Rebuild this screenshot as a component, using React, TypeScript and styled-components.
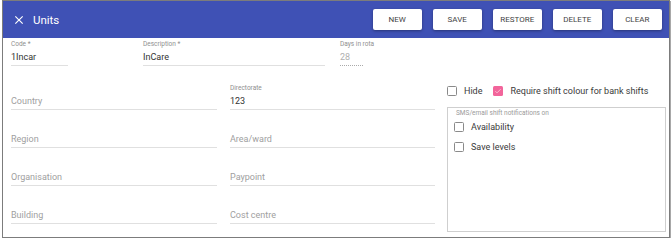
import React from 'react';
import styled, { createGlobalStyle } from 'styled-components';

const GlobalStyle = createGlobalStyle`
  body {
    margin: 0;
    background: #fff;
    font-family: Roboto, "Liberation Sans", sans-serif;
  }
`;

const Frame = styled.div`
  box-sizing: border-box;
  width: 668px;
  height: 238px;
  margin-left: 2px;
  border: 1px solid #7c7c7c;
  box-shadow: 1px 1px 0 #a8a8a8;
  display: flex;
  flex-direction: column;
  overflow: hidden;
`;

const Header = styled.div`
  height: 37px;
  flex-shrink: 0;
  display: flex;
  align-items: center;
  padding: 0 7px 0 9px;
  background: #3f51b5;
  color: #fff;
`;

const CloseIcon = styled.svg`
  width: 14px;
  height: 14px;
  fill: #fff;
`;

const Title = styled.span`
  margin-left: 7px;
  font-size: 11.5px;
  flex-grow: 1;
`;

const Actions = styled.div`
  display: flex;
  gap: 10.5px;
`;

const ActionButton = styled.button`
  width: 49.5px;
  height: 21px;
  padding: 0;
  border: none;
  border-radius: 2px;
  background: #fff;
  box-shadow: 0 1px 3px rgba(0, 0, 0, 0.35);
  font-family: Roboto, "Liberation Sans", sans-serif;
  font-size: 8px;
  font-weight: 400;
  color: #444;
  text-transform: uppercase;
`;

const Body = styled.div`
  padding: 2px 2px 0 8px;
  display: flex;
  flex-direction: column;
`;

const TopRow = styled.div`
  display: flex;
  align-items: flex-end;
`;

const Field = styled.div<{ $width?: number; $gap?: number; $dotted?: boolean }>`
  box-sizing: border-box;
  display: flex;
  flex-direction: column;
  justify-content: flex-end;
  width: ${p => (p.$width ? `${p.$width}px` : 'auto')};
  margin-left: ${p => p.$gap || 0}px;
  padding-bottom: 2px;
  border-bottom: 1px ${p => (p.$dotted ? 'dotted #aaa' : 'solid #e0e0e0')};
`;

const Label = styled.span`
  font-size: 6.5px;
  line-height: 9px;
  margin-bottom: 2px;
  color: #8f8f8f;
  white-space: nowrap;
`;

const Value = styled.span<{ $muted?: boolean; $placeholder?: boolean }>`
  font-size: 9px;
  line-height: 12px;
  color: ${p => (p.$placeholder ? '#a0a0a0' : p.$muted ? '#b0b0b0' : '#333')};
  white-space: nowrap;
`;

const MainRow = styled.div`
  display: flex;
  margin-top: 6px;
`;

const FieldGrid = styled.div`
  display: grid;
  grid-template-columns: 206px 205px;
  grid-auto-rows: 38px;
  column-gap: 13px;
`;

const Side = styled.div`
  margin-left: 12px;
  width: 219px;
  display: flex;
  flex-direction: column;
`;

const CheckRow = styled.div`
  display: flex;
  align-items: center;
  height: 14px;
  margin-top: 12px;
`;

const CheckItem = styled.label<{ $gap?: number }>`
  display: flex;
  align-items: center;
  gap: 7px;
  margin-left: ${p => p.$gap || 0}px;
  font-size: 9px;
  color: #3a3a3a;
  white-space: nowrap;
`;

const Box = styled.span<{ $checked?: boolean }>`
  box-sizing: border-box;
  width: 10px;
  height: 10px;
  border-radius: 1.5px;
  border: ${p => (p.$checked ? 'none' : '1.5px solid #8a8a8a')};
  background: ${p => (p.$checked ? '#f2659b' : '#fff')};
  display: flex;
  align-items: center;
  justify-content: center;
`;

const Tick = styled.svg`
  width: 8px;
  height: 8px;
  fill: none;
  stroke: #fbd0e0;
  stroke-width: 2.4;
`;

const NotifyBox = styled.div`
  box-sizing: border-box;
  margin-top: 9px;
  height: 125px;
  border: 1px solid #cfcfcf;
  padding: 1px 0 0 6px;
  display: flex;
  flex-direction: column;
`;

const NotifyLabel = styled.span`
  font-size: 6.5px;
  line-height: 8px;
  padding-left: 2px;
  color: #9a9a9a;
`;

const NotifyRow = styled.div`
  height: 20px;
  display: flex;
  align-items: center;
`;

const Checkbox: React.FC<{ checked?: boolean }> = ({ checked }) => (
  <Box $checked={checked}>
    {checked && (
      <Tick viewBox="0 0 24 24">
        <path d="M4 12.5l5 5L20 6.5" />
      </Tick>
    )}
  </Box>
);

const gridFields = [
  { placeholder: 'Country' },
  { label: 'Directorate', value: '123' },
  { placeholder: 'Region' },
  { placeholder: 'Area/ward' },
  { placeholder: 'Organisation' },
  { placeholder: 'Paypoint' },
  { placeholder: 'Building' },
  { placeholder: 'Cost centre' },
];

const App: React.FC = function() {
  return (
    <>
      <GlobalStyle />
      <Frame>
        <Header>
          <CloseIcon viewBox="0 0 24 24">
            <path d="M19 6.41 17.59 5 12 10.59 6.41 5 5 6.41 10.59 12 5 17.59 6.41 19 12 13.41 17.59 19 19 17.59 13.41 12z" />
          </CloseIcon>
          <Title>Units</Title>
          <Actions>
            {['New', 'Save', 'Restore', 'Delete', 'Clear'].map(name => (
              <ActionButton key={name}>{name}</ActionButton>
            ))}
          </Actions>
        </Header>
        <Body>
          <TopRow>
            <Field $width={57}>
              <Label>Code *</Label>
              <Value>1Incar</Value>
            </Field>
            <Field $width={182} $gap={75}>
              <Label>Description *</Label>
              <Value>InCare</Value>
            </Field>
            <Field $width={23} $gap={15} $dotted>
              <Label>Days in rota</Label>
              <Value $muted>28</Value>
            </Field>
          </TopRow>
          <MainRow>
            <FieldGrid>
              {gridFields.map((f, i) => (
                <Field key={i}>
                  {f.label && <Label>{f.label}</Label>}
                  {f.value ? <Value>{f.value}</Value> : <Value $placeholder>{f.placeholder}</Value>}
                </Field>
              ))}
            </FieldGrid>
            <Side>
              <CheckRow>
                <CheckItem>
                  <Checkbox />
                  Hide
                </CheckItem>
                <CheckItem $gap={11}>
                  <Checkbox checked />
                  Require shift colour for bank shifts
                </CheckItem>
              </CheckRow>
              <NotifyBox>
                <NotifyLabel>SMS/email shift notifications on</NotifyLabel>
                <NotifyRow>
                  <CheckItem>
                    <Checkbox />
                    Availability
                  </CheckItem>
                </NotifyRow>
                <NotifyRow>
                  <CheckItem>
                    <Checkbox />
                    Save levels
                  </CheckItem>
                </NotifyRow>
              </NotifyBox>
            </Side>
          </MainRow>
        </Body>
      </Frame>
    </>
  );
};

export default App;
